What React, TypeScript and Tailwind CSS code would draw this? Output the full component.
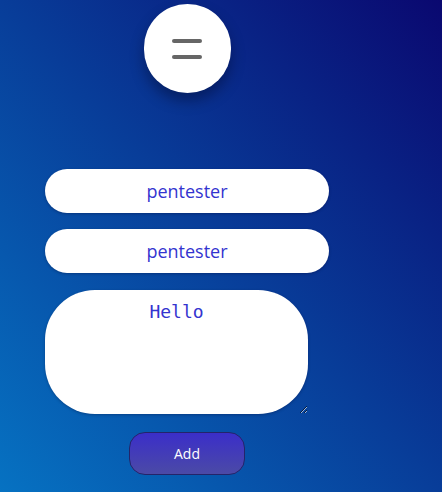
const App = () => {
  return (
    <div className="w-full h-[492px] overflow-hidden bg-[linear-gradient(to_top_right,#0672c2,#0a0870)] font-['Open_Sans','Noto_Sans',sans-serif]">
      <div className="w-[284px] ml-[45px] pt-[4px] flex flex-col items-center">
        <button className="w-[87px] h-[89px] rounded-full bg-white shadow-[0_8px_14px_rgba(0,0,20,0.35)] flex flex-col items-center justify-center gap-[12px]">
          <span className="block w-[30px] h-[4px] rounded-full bg-[#666666]" />
          <span className="block w-[30px] h-[4px] rounded-full bg-[#666666]" />
        </button>
        <div className="mt-[76px] w-full flex flex-col gap-[16px]">
          <input
            defaultValue="pentester"
            className="w-full h-[44px] rounded-full bg-white text-center text-[18px] text-[#3434cf] outline-none shadow-[0_1px_3px_rgba(0,0,40,0.3)]"
          />
          <input
            defaultValue="pentester"
            className="w-full h-[44px] rounded-full bg-white text-center text-[18px] text-[#3434cf] outline-none shadow-[0_1px_3px_rgba(0,0,40,0.3)]"
          />
        </div>
        <textarea
          defaultValue="Hello"
          className="self-start mt-[17px] w-[263px] h-[124px] rounded-[50px] bg-white text-center pt-[8px] text-[18px] text-[#3434cf] font-['DejaVu_Sans_Mono',monospace] outline-none shadow-[0_1px_3px_rgba(0,0,40,0.3)]"
        />
        <button className="mt-[18px] w-[116px] h-[43px] rounded-[16px] border border-[#24246a] bg-[linear-gradient(to_bottom,#3b2ec9,#4b4aa6)] text-white text-[14px]">
          Add
        </button>
      </div>
    </div>
  );
};

export default App;
